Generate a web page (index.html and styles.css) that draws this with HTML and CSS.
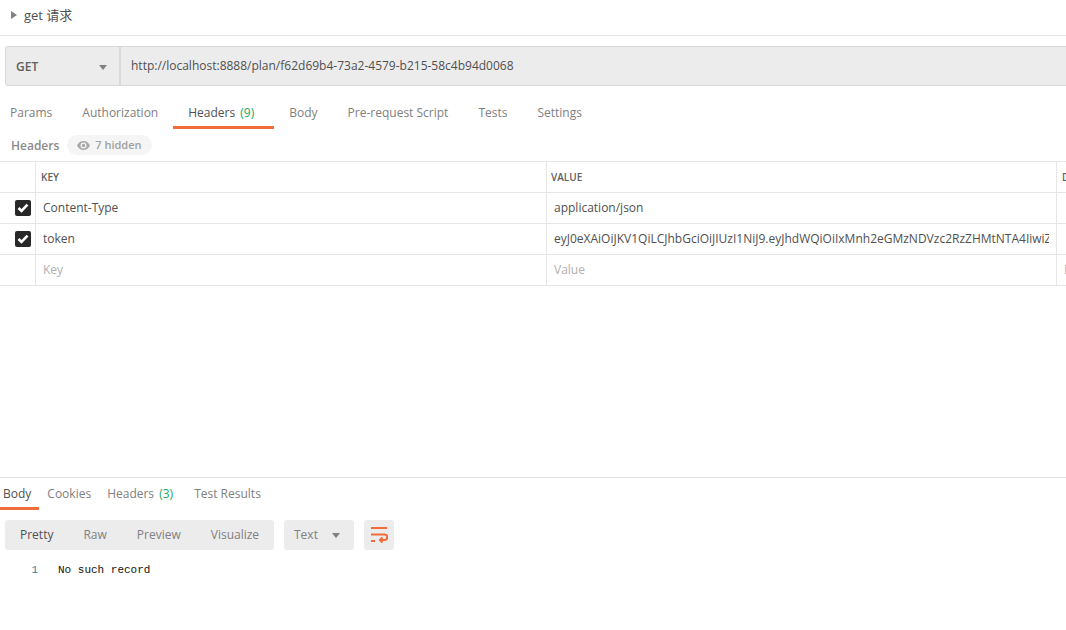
FILE: index.html
```html
<!DOCTYPE html>
<html lang="zh">
<head>
<meta charset="utf-8">
<title>get 请求</title>
<link rel="stylesheet" href="styles.css">
</head>
<body>
<header class="title-row">
  <svg class="caret-right" width="6" height="8" viewBox="0 0 6 8"><path d="M0 0l6 4-6 4z"/></svg>
  <span class="title">get 请求</span>
</header>
<section class="request-bar">
  <div class="method"><span>GET</span><i class="caret-down"></i></div>
  <div class="url">http://localhost:8888/plan/f62d69b4-73a2-4579-b215-58c4b94d0068</div>
</section>
<nav class="tabs req-tabs">
  <a class="tab">Params</a>
  <a class="tab">Authorization</a>
  <a class="tab active">Headers <em>(9)</em></a>
  <a class="tab">Body</a>
  <a class="tab">Pre-request Script</a>
  <a class="tab">Tests</a>
  <a class="tab">Settings</a>
</nav>
<div class="headers-meta">
  <span class="meta-label">Headers</span>
  <span class="pill">
    <svg width="13" height="9" viewBox="0 0 13 9"><path d="M6.5 0C3.6 0 1.2 1.8 0 4.5 1.2 7.200 3.600 9 6.500 9s5.300-1.800 6.500-4.500C11.800 1.800 9.400 0 6.500 0zm0 7.500a3 3 0 1 1 0-6 3 3 0 0 1 0 6zm0-4.700a1.700 1.700 0 1 0 0 3.400 1.700 1.700 0 0 0 0-3.400z"/></svg>
    7 hidden
  </span>
</div>
<div class="grid">
  <div class="row head">
    <div class="cell check"></div>
    <div class="cell key">KEY</div>
    <div class="cell value">VALUE</div>
    <div class="cell desc">DESCRIPTION</div>
  </div>
  <div class="row">
    <div class="cell check"><span class="box"><svg width="12" height="10" viewBox="0 0 12 10"><path d="M1.500 5l3 3 6-6.300" /></svg></span></div>
    <div class="cell key">Content-Type</div>
    <div class="cell value">application/json</div>
    <div class="cell desc"></div>
  </div>
  <div class="row">
    <div class="cell check"><span class="box"><svg width="12" height="10" viewBox="0 0 12 10"><path d="M1.500 5l3 3 6-6.300" /></svg></span></div>
    <div class="cell key">token</div>
    <div class="cell value"><span class="clip">eyJ0eXAiOiJKV1QiLCJhbGciOiJIUzI1NiJ9.eyJhdWQiOiIxMnh2eGMzNDVzc2RzZHMtNTA4IiwiZXhwIjoxNTk</span></div>
    <div class="cell desc"></div>
  </div>
  <div class="row ghost">
    <div class="cell check"></div>
    <div class="cell key">Key</div>
    <div class="cell value">Value</div>
    <div class="cell desc">Description</div>
  </div>
</div>
<section class="response">
  <nav class="tabs res-tabs">
    <a class="tab active">Body</a>
    <a class="tab">Cookies</a>
    <a class="tab">Headers <em>(3)</em></a>
    <a class="tab">Test Results</a>
  </nav>
  <div class="toolbar">
    <div class="segment">
      <span class="seg on">Pretty</span>
      <span class="seg">Raw</span>
      <span class="seg">Preview</span>
      <span class="seg">Visualize</span>
    </div>
    <div class="format"><span>Text</span><i class="caret-down"></i></div>
    <div class="wrap">
      <svg width="18" height="16" viewBox="0 0 18 16"><path d="M1 1h16M1 7.500h13.500a2.700 2.700 0 0 1 0 5.500H10M12.500 10.500L10 13l2.500 2.500M1 14h4"/></svg>
    </div>
  </div>
  <div class="code"><span class="ln">1</span><span class="src">No such record</span></div>
</section>
</body>
</html>
```
FILE: styles.css
```css
* { box-sizing: border-box; }
html, body { margin: 0; height: 630px; overflow: hidden; background: #fff; }
body { font: 12px/18px "Open Sans", "Noto Sans CJK SC", sans-serif; color: #505050; width: 1066px; }

.title-row { height: 36px; border-bottom: 1px solid #e4e4e4; display: flex; align-items: center; padding: 0 0 6px 11px; gap: 7px; }
.caret-right { fill: #808080; }
.title { font-size: 13px; color: #505050; }

.request-bar { margin: 10px 0 0 5px; width: 1100px; height: 40px; display: flex; background: #ececec; border: 1px solid #d9d9d9; border-radius: 3px; }
.method { width: 115px; flex: none; border-right: 2px solid #d9d9d9; display: flex; align-items: center; justify-content: space-between; padding: 2px 12px 0 10px; font-weight: 600; color: #606060; }
.caret-down { width: 0; height: 0; border-left: 4px solid transparent; border-right: 4px solid transparent; border-top: 5px solid #808080; }
.url { padding-left: 10px; line-height: 38px; color: #505050; }

.tabs { display: flex; }
.tab { color: #808080; display: block; }
.tab em { font-style: normal; color: #26a65b; margin-left: 2px; }
.tab.active { color: #505050; border-bottom: 3px solid #f26b3a; }

.req-tabs { margin-top: 12px; height: 31px; }
.req-tabs .tab { padding: 6px 15px 0; height: 31px; }
.req-tabs .tab:first-child { padding-left: 10px; }
.req-tabs .tab.active { padding-right: 20px; }

.headers-meta { height: 32px; display: flex; align-items: center; padding: 1px 0 0 11px; gap: 8px; }
.meta-label { font-weight: 600; color: #8a8a8a; }
.pill { height: 20px; margin-top: -1px; display: flex; align-items: center; gap: 5px; padding: 0 10px; border-radius: 10px; background: #f5f5f5; color: #a0a0a0; font-size: 11px; font-weight: 600; }
.pill svg { fill: #a8a8a8; }

.grid { border-top: 1px solid #e6e6e6; }
.row { display: grid; grid-template-columns: 36px 511px 510px 100px; height: 31px; border-bottom: 1px solid #e6e6e6; overflow: hidden; }
.cell { border-right: 1px solid #e6e6e6; padding: 0 7px; line-height: 30px; white-space: nowrap; overflow: hidden; color: #505050; }
.clip { display: block; overflow: hidden; }
.cell.desc { border-right: 0; }
.head .cell { font-size: 10px; font-weight: 600; color: #606060; padding-left: 5px; }
.head .cell.value { padding-left: 4px; }
.ghost .cell { color: #b0b0b0; }
.check { padding: 7px 0 0 15px; line-height: 0; }
.box { width: 16px; height: 16px; border-radius: 2px; background: #282828; display: flex; align-items: center; justify-content: center; }
.box svg { fill: none; stroke: #fff; stroke-width: 2.600; }

.response { margin-top: 191px; border-top: 1px solid #e2e2e2; }
.res-tabs { height: 32px; gap: 0; }
.res-tabs .tab { padding: 7px 0 0; height: 32px; margin-right: 16px; }
.res-tabs .tab.active { padding: 7px 8px 0 3px; margin-right: 8px; }
.res-tabs .tab:nth-child(3) { margin-right: 21px; }

.toolbar { display: flex; margin: 10px 0 0 5px; height: 30px; gap: 10px; }
.segment { display: flex; background: #ececec; border-radius: 3px; padding: 0 15px; gap: 30px; align-items: center; width: 269px; }
.seg { color: #808080; }
.seg.on { color: #505050; }
.format { width: 70px; background: #ececec; border-radius: 3px; display: flex; align-items: center; justify-content: space-between; padding: 0 14px 0 10px; color: #808080; }
.wrap { width: 30px; background: #ececec; border-radius: 3px; display: flex; align-items: center; justify-content: center; }
.wrap svg { fill: none; stroke: #f26b3a; stroke-width: 2; }

.code { margin-top: 11px; font: 11px/18px "Liberation Mono", monospace; display: flex; color: #111; }
.ln { width: 38px; text-align: right; color: #2a7f9e; }
.src { margin-left: 20px; }
```
